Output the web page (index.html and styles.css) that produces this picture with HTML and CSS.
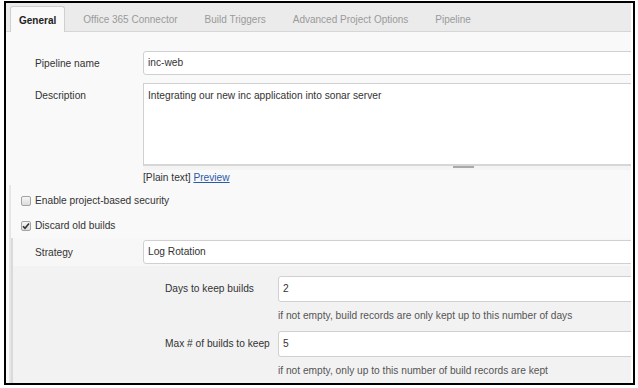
FILE: index.html
```html
<!DOCTYPE html>
<html lang="en">
<head>
  <meta charset="UTF-8">
  <meta name="viewport" content="width=device-width, initial-scale=1.0">
  <title>inc-web Config</title>
  <link rel="stylesheet" href="styles.css">
</head>
<body>

  <div class="frame">
    <div class="page">

      <!-- Config tabs -->
      <div class="tabbar">
        <div class="tab active">General</div>
        <div class="tab">Office 365 Connector</div>
        <div class="tab">Build Triggers</div>
        <div class="tab">Advanced Project Options</div>
        <div class="tab">Pipeline</div>
      </div>

      <div class="content">
        <div class="field">
          <label class="label">Pipeline name</label>
          <div class="input">inc-web</div>
        </div>

        <div class="field field-desc">
          <label class="label label-top">Description</label>
          <div>
            <div class="textarea">Integrating our new inc application into sonar server</div>
            <div class="handle"><span class="grip"></span></div>
            <div class="hint">[Plain text] <a href="#" class="link">Preview</a></div>
          </div>
        </div>

        <!-- Optional blocks -->
        <div class="block">
          <div class="check-row">
            <span class="checkbox"></span>
            <span>Enable project-based security</span>
          </div>
          <div class="check-row">
            <span class="checkbox checked">
              <svg width="8" height="8" viewBox="0 0 8 8"><path d="M1 4.2 L3 6.3 L7 1.4" fill="none" stroke="#333" stroke-width="1.6"/></svg>
            </span>
            <span>Discard old builds</span>
          </div>

          <div class="nested">
            <div class="field field-strategy">
              <label class="label">Strategy</label>
              <div class="input">Log Rotation</div>
            </div>

            <div class="inner">
              <div class="sub-field">
                <label class="label">Days to keep builds</label>
                <div class="input input-tall">2</div>
              </div>
              <div class="help">if not empty, build records are only kept up to this number of days</div>
              <div class="sub-field">
                <label class="label">Max # of builds to keep</label>
                <div class="input input-tall">5</div>
              </div>
              <div class="help">if not empty, only up to this number of build records are kept</div>
            </div>
          </div>
        </div>
      </div>

    </div>
  </div>

</body>
</html>
```

FILE: styles.css
```css
* {
  box-sizing: border-box;
}

body {
  margin: 0;
  background-color: #fff;
  font-family: 'Liberation Sans', Arial, sans-serif;
  font-size: 10.2px;
  color: #333;
}

/* Black frame round the screenshot */
.frame {
  margin: 1px 0 0 4px;
  width: 631px;
  height: 384px;
  border: 2px solid #000;
  padding-right: 2px;
  background-color: #fff;
}

.page {
  height: 100%;
  overflow: hidden;
  background-color: #f9f9f9;
}

/* Tabs */
.tabbar {
  display: flex;
  align-items: flex-end;
  gap: 9px;
  height: 29px;
  padding-left: 4px;
  background-color: #ebebeb;
  border-bottom: 1px solid #d6d6d6;
  font-size: 10px;
}

.tab {
  height: 25px;
  line-height: 27px;
  padding: 0 9px;
  color: #9a9a9a;
  white-space: nowrap;
}

.tab.active {
  height: 26px;
  margin-bottom: -1px;
  padding: 0 8px;
  background-color: #f9f9f9;
  border: 1px solid #cfcfcf;
  border-bottom: none;
  border-radius: 3px 3px 0 0;
  color: #222;
  font-weight: bold;
}

.content {
  padding: 19px 0 0 0;
}

/* Label + control rows */
.field {
  display: grid;
  grid-template-columns: 108px 1fr;
  padding-left: 29px;
}

.label {
  line-height: 24px;
  padding-top: 1px;
  color: #333;
  white-space: nowrap;
}

.label-top {
  line-height: 13px;
  padding-top: 6px;
}

.input {
  width: calc(100% + 40px);
  height: 24px;
  line-height: 22px;
  padding: 0 4px;
  background-color: #fff;
  border: 1px solid #d0d0d0;
  border-radius: 3px;
  color: #333;
}

.input-tall {
  height: 26px;
  line-height: 24px;
}

.field-desc {
  margin-top: 7px;
}

.textarea {
  width: calc(100% + 40px);
  height: 83px;
  padding: 5px 4px;
  line-height: 13px;
  background-color: #fff;
  border: 1px solid #d0d0d0;
  border-bottom: 2px solid #d6d6d6;
}

.handle {
  height: 4px;
  padding-left: 310px;
  background-color: #f4f4f4;
}

.grip {
  display: block;
  width: 21px;
  height: 2px;
  background-color: #a9a9a9;
}

.hint {
  line-height: 13px;
  margin-top: 1px;
}

.link {
  color: #2b5aa8;
}

/* Optional block (checkboxes) */
.block {
  margin: 1px 0 0 3px;
  padding-top: 3px;
  border-left: 2px solid #e6e6e6;
}

.check-row {
  display: flex;
  align-items: center;
  gap: 4px;
  height: 25px;
  padding-left: 10px;
}

.checkbox {
  display: flex;
  align-items: center;
  justify-content: center;
  width: 10px;
  height: 10px;
  border: 1px solid #a3a3a3;
  border-radius: 2px;
  background: linear-gradient(#f6f6f6, #dcdcdc);
}

.nested {
  padding-top: 2px;
  border-left: 2px solid #dadada;
  background-color: #f7f7f7;
}

.field-strategy {
  padding-left: 22px;
}

.inner {
  margin-top: 1px;
  padding: 10px 0 0 152px;
  background-color: #f2f2f2;
}

.sub-field {
  display: grid;
  grid-template-columns: 113px 1fr;
}

.sub-field .label {
  line-height: 26px;
  padding-top: 0;
}

.help {
  height: 29px;
  line-height: 27px;
  padding-left: 113px;
  color: #555;
}
```
